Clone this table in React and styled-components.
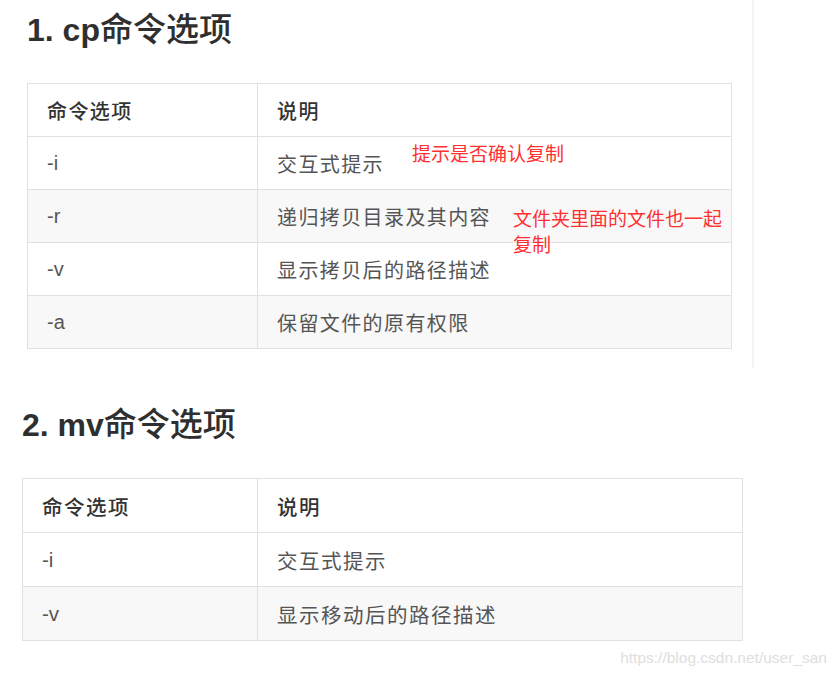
import React from "react";
import styled, { createGlobalStyle } from "styled-components";

const Global = createGlobalStyle`
  html, body { margin: 0; padding: 0; background: #ffffff; }
  body { font-family: "Liberation Sans", "Noto Sans CJK SC", sans-serif; }
  * { box-sizing: border-box; }
`;

const Page = styled.div`
  width: 836px;
  height: 676px;
  display: flex;
  flex-direction: column;
  overflow: hidden;
`;

const Section = styled.section`
  width: ${(p) => p.$width}px;
  height: ${(p) => (p.$height ? `${p.$height}px` : "auto")};
  padding-left: ${(p) => p.$indent}px;
  padding-top: ${(p) => p.$top}px;
  border-right: ${(p) => (p.$edge ? "2px solid #f4f4f4" : "none")};
  display: flex;
  flex-direction: column;
  align-items: flex-start;
`;

const Heading = styled.h2`
  margin: 0 0 36px 0;
  height: 40px;
  line-height: 40px;
  font-size: 32px;
  font-weight: 700;
  color: #2f2f2f;
  font-family: "Liberation Sans", "Noto Sans CJK SC", sans-serif;
  white-space: nowrap;
`;

const HeadingCjk = styled.span`
  font-family: "Noto Sans CJK SC", sans-serif;
  font-weight: 500;
  font-size: 33px;
`;

const TableWrap = styled.div`
  position: relative;
`;

const Table = styled.table`
  width: ${(p) => p.$width}px;
  border-collapse: collapse;
  table-layout: fixed;
  border: 1px solid #e1e1e1;
`;

const Row = styled.tr`
  height: ${(p) => p.$h}px;
  background: ${(p) => (p.$striped ? "#f8f8f8" : "#ffffff")};
`;

const Cell = styled.td`
  border: 1px solid #e1e1e1;
  padding: 0 19px;
  font-size: ${(p) => p.$size}px;
  letter-spacing: ${(p) => p.$spacing}px;
  color: #555555;
  font-family: "Liberation Sans", "Noto Sans CJK SC", sans-serif;
  vertical-align: middle;
  white-space: nowrap;
  text-align: left;
`;

const HeadCell = styled(Cell).attrs({ as: "th" })`
  color: #333333;
  font-weight: 500;
`;

const Note = styled.div`
  position: absolute;
  left: ${(p) => p.$x}px;
  top: ${(p) => p.$y}px;
  color: #ff3030;
  font-size: 19px;
  line-height: 26px;
  font-family: "Noto Sans CJK SC", sans-serif;
  white-space: nowrap;
`;

const Footer = styled.div`
  display: flex;
  justify-content: flex-end;
  padding: 6px 9px 0 0;
`;

const Watermark = styled.span`
  font-family: "Liberation Sans", sans-serif;
  font-size: 15.5px;
  color: #dedede;
  line-height: 22px;
`;

const cpRows = [
  ["-i", "交互式提示"],
  ["-r", "递归拷贝目录及其内容"],
  ["-v", "显示拷贝后的路径描述"],
  ["-a", "保留文件的原有权限"],
];

const mvRows = [
  ["-i", "交互式提示"],
  ["-v", "显示移动后的路径描述"],
];

function OptionTable({ rows, width, col, rowH, size, spacing, stripeFrom }) {
  return (
    <Table $width={width}>
      <colgroup>
        <col style={{ width: col }} />
        <col />
      </colgroup>
      <thead>
        <Row $h={rowH}>
          <HeadCell $size={size} $spacing={spacing}>命令选项</HeadCell>
          <HeadCell $size={size} $spacing={spacing}>说明</HeadCell>
        </Row>
      </thead>
      <tbody>
        {rows.map(([opt, desc], i) => (
          <Row key={opt + i} $h={rowH} $striped={i % 2 === stripeFrom}>
            <Cell $size={size} $spacing={0}>{opt}</Cell>
            <Cell $size={size} $spacing={spacing}>{desc}</Cell>
          </Row>
        ))}
      </tbody>
    </Table>
  );
}

export default function App() {
  return (
    <>
      <Global />
      <Page>
        <Section $width={754} $height={368} $indent={27} $top={7} $edge>
          <Heading>
            1. cp<HeadingCjk>命令选项</HeadingCjk>
          </Heading>
          <TableWrap>
            <OptionTable rows={cpRows} width={705} col={230} rowH={53} size={20} spacing={1.4} stripeFrom={1} />
            <Note $x={385} $y={57}>提示是否确认复制</Note>
            <Note $x={486} $y={122}>
              文件夹里面的文件也一起
              <br />
              复制
            </Note>
          </TableWrap>
        </Section>
        <Section $width={836} $indent={22} $top={34}>
          <Heading>
            2. mv<HeadingCjk>命令选项</HeadingCjk>
          </Heading>
          <OptionTable rows={mvRows} width={721} col={235} rowH={54} size={20.5} spacing={1.5} stripeFrom={1} />
        </Section>
        <Footer>
          <Watermark>https://blog.csdn.net/user_san</Watermark>
        </Footer>
      </Page>
    </>
  );
}
